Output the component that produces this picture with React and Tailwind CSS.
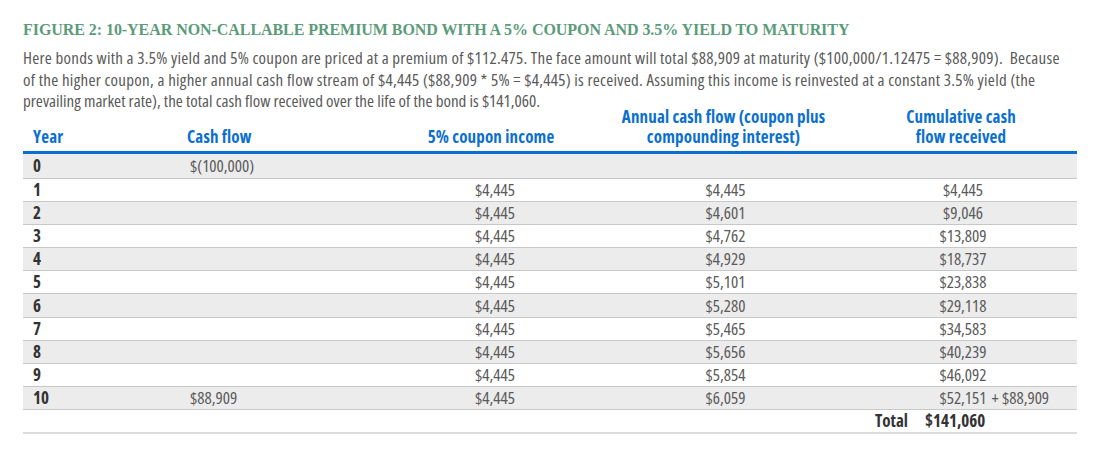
const rows = [
  { year: "0", cash: "$(100,000)", coupon: "", annual: "", cum: "" },
  { year: "1", cash: "", coupon: "$4,445", annual: "$4,445", cum: "$4,445" },
  { year: "2", cash: "", coupon: "$4,445", annual: "$4,601", cum: "$9,046" },
  { year: "3", cash: "", coupon: "$4,445", annual: "$4,762", cum: "$13,809" },
  { year: "4", cash: "", coupon: "$4,445", annual: "$4,929", cum: "$18,737" },
  { year: "5", cash: "", coupon: "$4,445", annual: "$5,101", cum: "$23,838" },
  { year: "6", cash: "", coupon: "$4,445", annual: "$5,280", cum: "$29,118" },
  { year: "7", cash: "", coupon: "$4,445", annual: "$5,465", cum: "$34,583" },
  { year: "8", cash: "", coupon: "$4,445", annual: "$5,656", cum: "$40,239" },
  { year: "9", cash: "", coupon: "$4,445", annual: "$5,854", cum: "$46,092" },
  { year: "10", cash: "$88,909", coupon: "$4,445", annual: "$6,059", cum: "$52,151", extra: "+ $88,909" },
];

const grid = "grid grid-cols-[147px_210px_222px_243px_232px]";

const App = () => {
  return (
    <div className="w-[1100px] h-[459px] bg-white px-[23px] pt-[20px] font-['Open_Sans',sans-serif] [font-stretch:78%] text-[#5a5a5a]">
      {/* TITLE */}
      <h2 className="font-['Liberation_Serif',serif] [font-stretch:normal] font-bold text-[16px] leading-[20px] tracking-[-0.06px] text-[#5b9b7a] whitespace-nowrap">
        FIGURE 2: 10-YEAR NON-CALLABLE PREMIUM BOND WITH A 5% COUPON AND 3.5% YIELD TO MATURITY
      </h2>

      {/* INTRO */}
      <p className="mt-[7px] text-[17px] leading-[21.5px] whitespace-nowrap">
        <span className="block tracking-[0.25px]">Here bonds with a 3.5% yield and 5% coupon are priced at a premium of $112.475. The face amount will total $88,909 at maturity ($100,000/1.12475 = $88,909).&nbsp; Because</span>
        <span className="block tracking-[0.27px]">of the higher coupon, a higher annual cash flow stream of $4,445 ($88,909 * 5% = $4,445) is received. Assuming this income is reinvested at a constant 3.5% yield (the</span>
        <span className="block">prevailing market rate), the total cash flow received over the life of the bond is $141,060.</span>
      </p>

      {/* TABLE */}
      <div className="w-[1054px] -mt-[5px]">
        <div className={`${grid} items-end pb-[4px] border-b-[3px] border-[#0b6fcf] text-[#0b6fcf] font-bold text-[17px] leading-[20px] tracking-[0.15px]`}>
          <div className="pl-[10px]">Year</div>
          <div className="pl-[17px]">Cash flow</div>
          <div className="text-center">5% coupon income</div>
          <div className="text-center">Annual cash flow (coupon plus<br />compounding interest)</div>
          <div className="text-center">Cumulative cash<br />flow received</div>
        </div>

        {rows.map((r, i) => (
          <div
            key={r.year}
            className={`${grid} items-center ${i === 0 ? "h-[25px]" : "h-[23.2px]"} border-b border-[#c8c8c8] text-[17px] leading-[20px] ${i % 2 === 0 ? "bg-[#ececec]" : "bg-white"}`}
          >
            <div className="pl-[10px] font-bold text-[#333]">{r.year}</div>
            <div className="pl-[20px]">{r.cash}</div>
            <div className="text-center pl-[8px]">{r.coupon}</div>
            <div className="text-center pl-[4px]">{r.annual}</div>
            <div className="grid grid-cols-[minmax(0,1fr)_auto_minmax(0,1fr)] pl-[4px]">
              <span></span>
              <span>{r.cum}</span>
              <span className="pl-[5px] whitespace-nowrap">{r.extra}</span>
            </div>
          </div>
        ))}

        {/* TOTAL */}
        <div className={`${grid} items-center h-[23.2px] border-b-[2px] border-[#dcdcdc] text-[17px] leading-[20px] font-bold text-[#333]`}>
          <div></div>
          <div></div>
          <div></div>
          <div></div>
          <div className="flex gap-[17px] pl-[30px]">
            <span>Total</span>
            <span>$141,060</span>
          </div>
        </div>
      </div>
    </div>
  );
};

export default App;
